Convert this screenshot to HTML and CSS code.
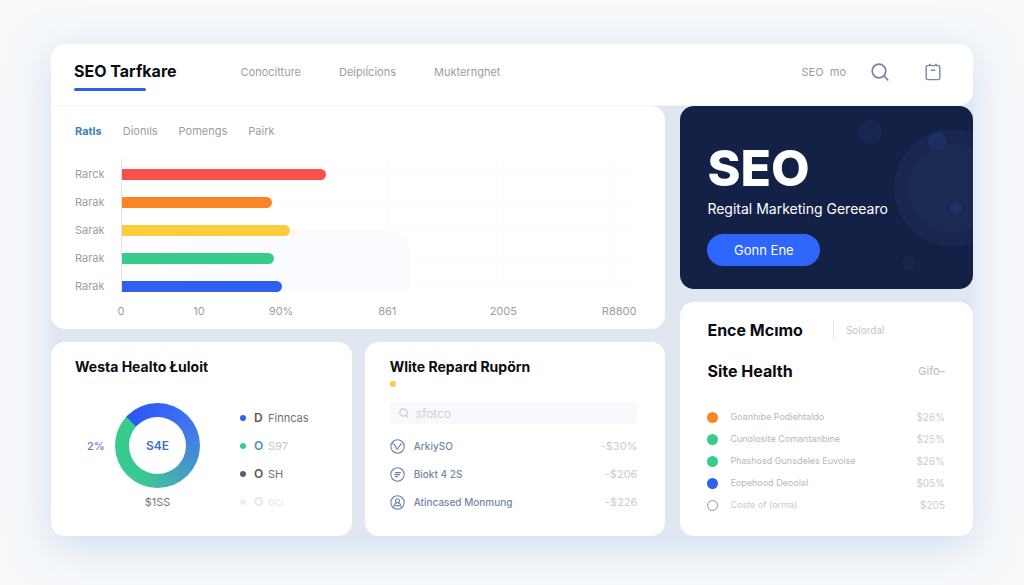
FILE: index.html
```html
<!DOCTYPE html>
<html lang="en">
<head>
    <meta charset="UTF-8">
    <meta name="viewport" content="width=device-width, initial-scale=1.0">
    <title>SEO Tarfkare</title>
    <link rel="stylesheet" href="styles.css">
</head>
<body>
    <div class="dashboard">
        <header class="header">
            <a href="#" class="logo">SEO Tarfkare</a>
            <nav class="nav">
                <a href="#">Conocitture</a>
                <a href="#">Deipıĺcions</a>
                <a href="#">Mukternghet</a>
            </nav>
            <div class="tools">
                <a href="#" class="tools-link">SEO &nbsp;mo</a>
                <button class="icon-btn" aria-label="Search">
                    <svg width="18" height="18" viewBox="0 0 18 18" fill="none" stroke="#7a8699" stroke-width="1.7" stroke-linecap="round">
                        <circle cx="8" cy="8" r="6.8"/>
                        <path d="M13 13l3.7 3.8"/>
                    </svg>
                </button>
                <button class="icon-btn" aria-label="Clipboard">
                    <svg width="16" height="18" viewBox="0 0 16 18" fill="none" stroke="#7a8699" stroke-width="1.4" stroke-linecap="round" stroke-linejoin="round">
                        <path d="M2.6 2.6h1.6l.8-1.4 1.2 1.4h3.6L11 1.2l.8 1.4h1.6q1.4 0 1.4 1.4v11q0 1.6-1.6 1.6H2.8q-1.6 0-1.6-1.6V4q0-1.4 1.4-1.4z"/>
                        <path d="M6.4 7.2h3.2"/>
                    </svg>
                </button>
            </div>
        </header>

        <main class="layout">
            <div class="left">
                <section class="card chart-card">
                    <nav class="tabs">
                        <a href="#" class="active">Ratls</a>
                        <a href="#">Dionıls</a>
                        <a href="#">Pomengs</a>
                        <a href="#">Pairk</a>
                    </nav>
                    <div class="chart">
                        <div class="labels">
                            <span>Rarck</span>
                            <span>Rarak</span>
                            <span>Sarak</span>
                            <span>Rarak</span>
                            <span>Rarak</span>
                        </div>
                        <div class="plot">
                            <div class="shade"></div>
                            <div class="track"><div class="bar red" style="width: 39.6%"></div></div>
                            <div class="track"><div class="bar orange" style="width: 29.1%"></div></div>
                            <div class="track"><div class="bar yellow" style="width: 32.6%"></div></div>
                            <div class="track"><div class="bar green" style="width: 29.5%"></div></div>
                            <div class="track"><div class="bar blue" style="width: 31.2%"></div></div>
                        </div>
                    </div>
                    <div class="axis">
                        <span>0</span>
                        <span>10</span>
                        <span>90%</span>
                        <span>861</span>
                        <span>2005</span>
                        <span>R8800</span>
                    </div>
                </section>

                <section class="card">
                    <h2>Westa Healto Łuloit</h2>
                    <div class="donut-row">
                        <span class="percent">2%</span>
                        <div class="donut"><div class="hole">S4E</div></div>
                        <ul class="legend">
                            <li><i class="dot blue"></i><b>D</b>Finncas</li>
                            <li class="teal"><i class="dot green"></i><b>O</b>S97</li>
                            <li><i class="dot grey"></i><b>O</b>SH</li>
                            <li class="faded"><i class="dot pale"></i><b>O</b>ocı</li>
                        </ul>
                        <span class="total">$1SS</span>
                    </div>
                </section>

                <section class="card">
                    <h2>Wlite Repard Rupörn</h2>
                    <i class="dot yellow title-dot"></i>
                    <label class="search">
                        <svg width="10" height="10" viewBox="0 0 10 10" fill="none" stroke="#c3cad6" stroke-width="1.2" stroke-linecap="round">
                            <circle cx="4.5" cy="4.5" r="3.7"/>
                            <path d="M7 7.2l1.6 2"/>
                        </svg>
                        <input type="text" placeholder="sfotco" aria-label="Search reports">
                    </label>
                    <ul class="reports">
                        <li>
                            <svg width="15" height="15" viewBox="0 0 15 15" fill="none" stroke="#6a83aa" stroke-width="1.1" stroke-linecap="round">
                                <circle cx="7.5" cy="7.5" r="6.7"/>
                                <path d="M4.4 5.6l2.8 4.6 4-5.6M2.6 4.8l1.8.8"/>
                            </svg>
                            <span>ArkiySO</span><em>-$30%</em>
                        </li>
                        <li>
                            <svg width="15" height="15" viewBox="0 0 15 15" fill="none" stroke="#6a83aa" stroke-width="1.1" stroke-linecap="round">
                                <circle cx="7.5" cy="7.5" r="6.7"/>
                                <path d="M5.5 5.6h5M4.7 7.6h4.8M5.5 9.6h2.2"/>
                            </svg>
                            <span>Biokt 4 2S</span><em>-$206</em>
                        </li>
                        <li>
                            <svg width="15" height="15" viewBox="0 0 15 15" fill="none" stroke="#6a83aa" stroke-width="1.1" stroke-linecap="round">
                                <circle cx="7.5" cy="7.5" r="6.7"/>
                                <circle cx="7.5" cy="5.8" r="2"/>
                                <path d="M3.8 11.6q.6-3 2.6-3.6M11.2 11.6q-.6-3-2.6-3.6M5.6 10.6h3.8"/>
                            </svg>
                            <span>Atincased Monmung</span><em>-$226</em>
                        </li>
                    </ul>
                </section>
            </div>

            <div class="right">
                <section class="hero">
                    <svg class="hero-art" width="130" height="183" viewBox="0 0 130 183">
                        <circle cx="109" cy="82" r="58" fill="#192750"/>
                        <circle cx="109" cy="82" r="44" fill="#1b2a51"/>
                        <circle cx="94" cy="35" r="9" fill="#1d3066"/>
                        <circle cx="113" cy="102" r="6" fill="#1d3069"/>
                        <circle cx="27" cy="26" r="12" fill="#17264f"/>
                        <circle cx="66" cy="157" r="7" fill="#17244c"/>
                    </svg>
                    <h1>SEO</h1>
                    <p>Regital Marketing Gereearo</p>
                    <button class="hero-btn">Gonn Ene</button>
                </section>

                <section class="card health">
                    <div class="health-head">
                        <h3>Ence Mcımo</h3>
                        <a href="#">Solordal</a>
                    </div>
                    <div class="health-title">
                        <h3>Site Health</h3>
                        <a href="#">Gifo–</a>
                    </div>
                    <ul class="health-list">
                        <li><i class="dot orange"></i><span>Goanhıbe Podiehtaldo</span><em>$26%</em></li>
                        <li><i class="dot green"></i><span>Cunolosite Comantanbine</span><em>$25%</em></li>
                        <li><i class="dot green"></i><span>Phashosd Gunsdeles Euvoise</span><em>$26%</em></li>
                        <li><i class="dot blue"></i><span>Eopehood Deoolal</span><em>$05%</em></li>
                        <li class="light"><i class="dot ring"></i><span>Coste of (orma)</span><em>$205</em></li>
                    </ul>
                </section>
            </div>
        </main>
    </div>
</body>
</html>
```

FILE: styles.css
```css
* {
    box-sizing: border-box;
}
body {
    margin: 0;
    padding: 44px 51px 49px;
    min-height: 100vh;
    font-family: Inter, "Liberation Sans", sans-serif;
    font-size: 11px;
    color: #979ea9;
    background-color: #f7f9fb;
}
a {
    color: inherit;
    text-decoration: none;
}
h1, h2, h3, p, ul {
    margin: 0;
    padding: 0;
}
ul {
    list-style: none;
}
em {
    font-style: normal;
}
button {
    border: none;
    padding: 0;
    font-family: inherit;
    cursor: pointer;
}

/* header */
.dashboard {
    border-radius: 14px;
    background-color: #e0e7f1;
    box-shadow: 0 10px 40px rgba(170, 195, 228, 0.5);
}
.header {
    display: flex;
    align-items: flex-start;
    padding: 15px 32px 14px 23px;
    line-height: 24px;
    background-color: #fff;
    border-radius: 14px 14px 14px 0;
    border-bottom: 1px solid #f3f5f8;
}
.logo {
    color: #0b0c10;
    font-size: 16px;
    font-weight: 700;
}
.logo::after {
    content: "";
    display: block;
    width: 72px;
    height: 3px;
    margin-top: 5px;
    border-radius: 2px;
    background-color: #2f5fe6;
}
.nav {
    display: flex;
    gap: 38px;
    margin-left: 64px;
    padding-top: 1px;
}
.tools {
    display: flex;
    align-items: center;
    margin-left: auto;
    padding-top: 1px;
}
.tools-link {
    margin-right: 25px;
}
.icon-btn {
    display: flex;
    background: none;
}
.icon-btn + .icon-btn {
    margin-left: 36px;
}

/* layout */
.layout {
    display: grid;
    grid-template-columns: 21fr 10fr;
    gap: 15px;
}
.left {
    display: grid;
    grid-template-columns: 1fr 1fr;
    gap: 13px;
}
.right {
    display: flex;
    flex-direction: column;
    gap: 13px;
}
.card {
    padding: 13px 28px 20px 24px;
    background-color: #fff;
    border-radius: 14px;
}
h2 {
    color: #0b0c10;
    font-size: 14px;
    line-height: 24px;
}
h3 {
    color: #0b0c10;
    font-size: 16px;
    line-height: 24px;
}
.dot {
    width: 6px;
    height: 6px;
    border-radius: 50%;
}
.red { background-color: #f9504a; }
.orange { background-color: #fb8524; }
.yellow { background-color: #fbcd3a; }
.green { background-color: #35cc8c; }
.blue { background-color: #2f60f0; }
.grey { background-color: #5d6068; }
.pale { background-color: #eceef1; }

/* chart */
.chart-card {
    grid-column: 1 / 3;
    padding: 15px 29px 8px 24px;
    border-top-left-radius: 0;
}
.tabs {
    display: flex;
    gap: 21px;
    line-height: 20px;
}
.tabs .active {
    color: #3f82bd;
    font-weight: 700;
}
.chart {
    display: flex;
    margin-top: 18px;
}
.labels, .plot {
    display: flex;
    flex-direction: column;
    gap: 16px;
    padding-top: 9px;
}
.labels {
    width: 46px;
    line-height: 12px;
}
.plot {
    position: relative;
    flex: 1;
    border-left: 1px solid #dfe3e8;
    background:
        linear-gradient(#f9fafb, #f9fafb) 52% 0 / 1px 100% no-repeat,
        linear-gradient(#f9fafb, #f9fafb) 74% 0 / 1px 100% no-repeat,
        linear-gradient(#f9fafb, #f9fafb) 96% 0 / 1px 100% no-repeat;
}
.shade {
    position: absolute;
    left: 0;
    right: 44%;
    top: 72px;
    bottom: 0;
    border-top-right-radius: 24px;
    background: linear-gradient(90deg, #fff, #fafbfe 40%);
}
.track {
    position: relative;
    display: flex;
    align-items: center;
    height: 12px;
    background: linear-gradient(#f9fafb, #f9fafb) center / 100% 1px no-repeat;
}
.bar {
    height: 11px;
    border-radius: 0 6px 6px 0;
}
.axis {
    display: grid;
    grid-template-columns: 78fr 78fr 86fr 126fr 106fr 80fr;
    margin-left: 7px;
    padding-top: 9px;
    line-height: 20px;
    text-align: center;
}
.axis span:last-child {
    text-align: right;
}

/* donut */
.donut-row {
    display: grid;
    grid-template-columns: 40px 85px 1fr;
    align-items: center;
    margin-top: 24px;
}
.percent {
    padding-left: 12px;
    color: #5c80bd;
    font-weight: 500;
}
.donut {
    display: grid;
    place-items: center;
    width: 85px;
    height: 85px;
    border-radius: 50%;
    background: conic-gradient(from -48deg, #2857f5, #3765f5 60deg, #4380e6 130deg, #45a3bd 190deg, #3bc795 245deg, #35cc8c);
}
.hole {
    width: 57px;
    height: 57px;
    border-radius: 50%;
    background-color: #fff;
    color: #3f6fc9;
    font-size: 12px;
    font-weight: 600;
    line-height: 57px;
    text-align: center;
}
.total {
    grid-column: 2;
    color: #6f747d;
    line-height: 28px;
    text-align: center;
}
.legend {
    grid-row: 1 / 3;
    grid-column: 3;
    padding-left: 40px;
    color: #6d717a;
    line-height: 28px;
}
.legend li {
    display: flex;
    align-items: center;
}
.legend b {
    width: 14px;
    margin-left: 8px;
    color: #55585f;
    font-size: 12px;
    font-weight: 600;
}
.legend .teal { color: #c3c7cc; }
.legend .teal b { color: #4d90b0; }
.legend .faded, .legend .faded b { color: #e4e6ea; }

/* reports */
.title-dot {
    display: block;
    margin: 2px 0 15px;
}
.left .card:last-child {
    padding-left: 25px;
}
.search {
    display: flex;
    align-items: center;
    gap: 7px;
    height: 22px;
    padding: 0 9px;
    border-radius: 4px;
    background-color: #f8f9fc;
}
.search input {
    flex: 1;
    min-width: 0;
    padding: 0;
    border: none;
    outline: none;
    background: none;
    font-family: inherit;
    font-size: 12px;
}
.search input::placeholder {
    color: #cdd3dc;
}
.reports {
    padding-top: 8px;
    line-height: 28px;
}
.reports li {
    display: flex;
    align-items: center;
    gap: 9px;
    color: #7487a2;
    font-size: 10px;
    font-weight: 500;
}
.reports em, .health-list em {
    margin-left: auto;
    color: #c8ccd3;
    font-size: 11px;
    font-weight: 400;
}
.health-list em {
    font-size: 10px;
}

/* hero */
.hero {
    position: relative;
    padding: 36px 27px 23px;
    border-radius: 14px;
    background-color: #142147;
    color: #fff;
    overflow: hidden;
}
.hero-art {
    position: absolute;
    top: 0;
    right: 0;
}
.hero h1 {
    position: relative;
    font-size: 50px;
    font-weight: 800;
    line-height: 52px;
}
.hero p {
    position: relative;
    font-size: 14px;
    line-height: 30px;
}
.hero-btn {
    position: relative;
    width: 113px;
    height: 32px;
    margin-top: 10px;
    border-radius: 16px;
    background-color: #2f66fb;
    color: #fff;
    font-size: 13px;
}

/* site health */
.health {
    flex: 1;
    padding: 16px 28px 20px 27px;
}
.health-head, .health-title {
    display: flex;
    align-items: center;
    justify-content: space-between;
}
.health-head {
    justify-content: flex-start;
    gap: 30px;
    color: #c0c6cf;
    font-size: 10px;
}
.health-head a {
    padding-left: 12px;
    border-left: 1px solid #e3e6eb;
    line-height: 20px;
}
.health-title {
    margin-top: 17px;
}
.health-title a {
    color: #b7bcc5;
}
.health-list {
    padding-top: 23px;
    line-height: 22px;
}
.health-list li {
    display: flex;
    align-items: center;
    color: #b3b8c0;
    font-size: 9px;
}
.health-list .dot {
    width: 11px;
    height: 11px;
    margin-right: 12px;
}
.health-list .ring {
    border: 1px solid #8e98a3;
}
.health-list .light {
    color: #c6cad0;
}
```
